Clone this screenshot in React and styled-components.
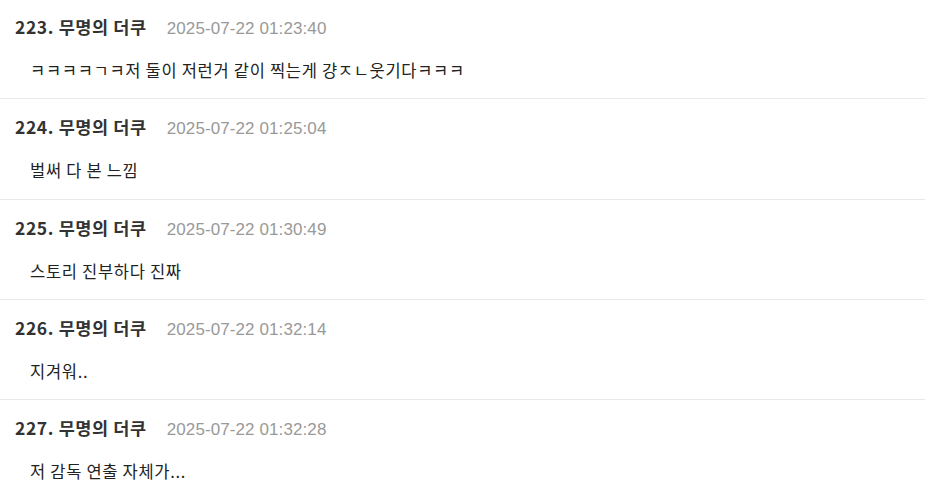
import React from "react";
import styled, { createGlobalStyle } from "styled-components";

const Global = createGlobalStyle`
  html, body { margin: 0; padding: 0; background: #fff; }
  body { font-family: "Noto Sans CJK KR", "Noto Sans", sans-serif; -webkit-font-smoothing: antialiased; }
`;

const List = styled.ul`
  list-style: none;
  margin: 0;
  padding: 0;
  width: 925px;
`;

const Item = styled.li`
  padding: 16px 15px 15px 15px;
  height: 68.25px;
  border-bottom: 1px solid #e9e9e9;
  display: flex;
  flex-direction: column;
  gap: 19px;
  &:first-child {
    padding-top: 15px;
  }
  &:last-child {
    border-bottom-color: transparent;
  }
`;

const Header = styled.div`
  display: flex;
  align-items: baseline;
  height: 24px;
  line-height: 24px;
`;

const Name = styled.span`
  font-size: 17.5px;
  font-weight: 700;
  color: #333;
  letter-spacing: 0.6px;
`;

const DateText = styled.span`
  margin-left: 20px;
  font-family: "Liberation Sans", "Noto Sans", sans-serif;
  font-size: 17px;
  color: #999;
  letter-spacing: 0.1px;
`;

const Body = styled.p`
  margin: 0;
  padding-left: 15px;
  height: 24px;
  line-height: 24px;
  font-size: 16.5px;
  letter-spacing: 0.7px;
  color: #222;
`;

const comments = [
  { no: 223, time: "2025-07-22 01:23:40", text: "ㅋㅋㅋㅋㄱㅋ저 둘이 저런거 같이 찍는게 걍ㅈㄴ웃기다ㅋㅋㅋ" },
  { no: 224, time: "2025-07-22 01:25:04", text: "벌써 다 본 느낌" },
  { no: 225, time: "2025-07-22 01:30:49", text: "스토리 진부하다 진짜" },
  { no: 226, time: "2025-07-22 01:32:14", text: "지겨워.." },
  { no: 227, time: "2025-07-22 01:32:28", text: "저 감독 연출 자체가..." },
];

export default function App() {
  return (
    <>
      <Global />
      <List>
        {comments.map((c) => (
          <Item key={c.no}>
            <Header>
              <Name>{c.no}. 무명의 더쿠</Name>
              <DateText>{c.time}</DateText>
            </Header>
            <Body>{c.text}</Body>
          </Item>
        ))}
      </List>
    </>
  );
}
